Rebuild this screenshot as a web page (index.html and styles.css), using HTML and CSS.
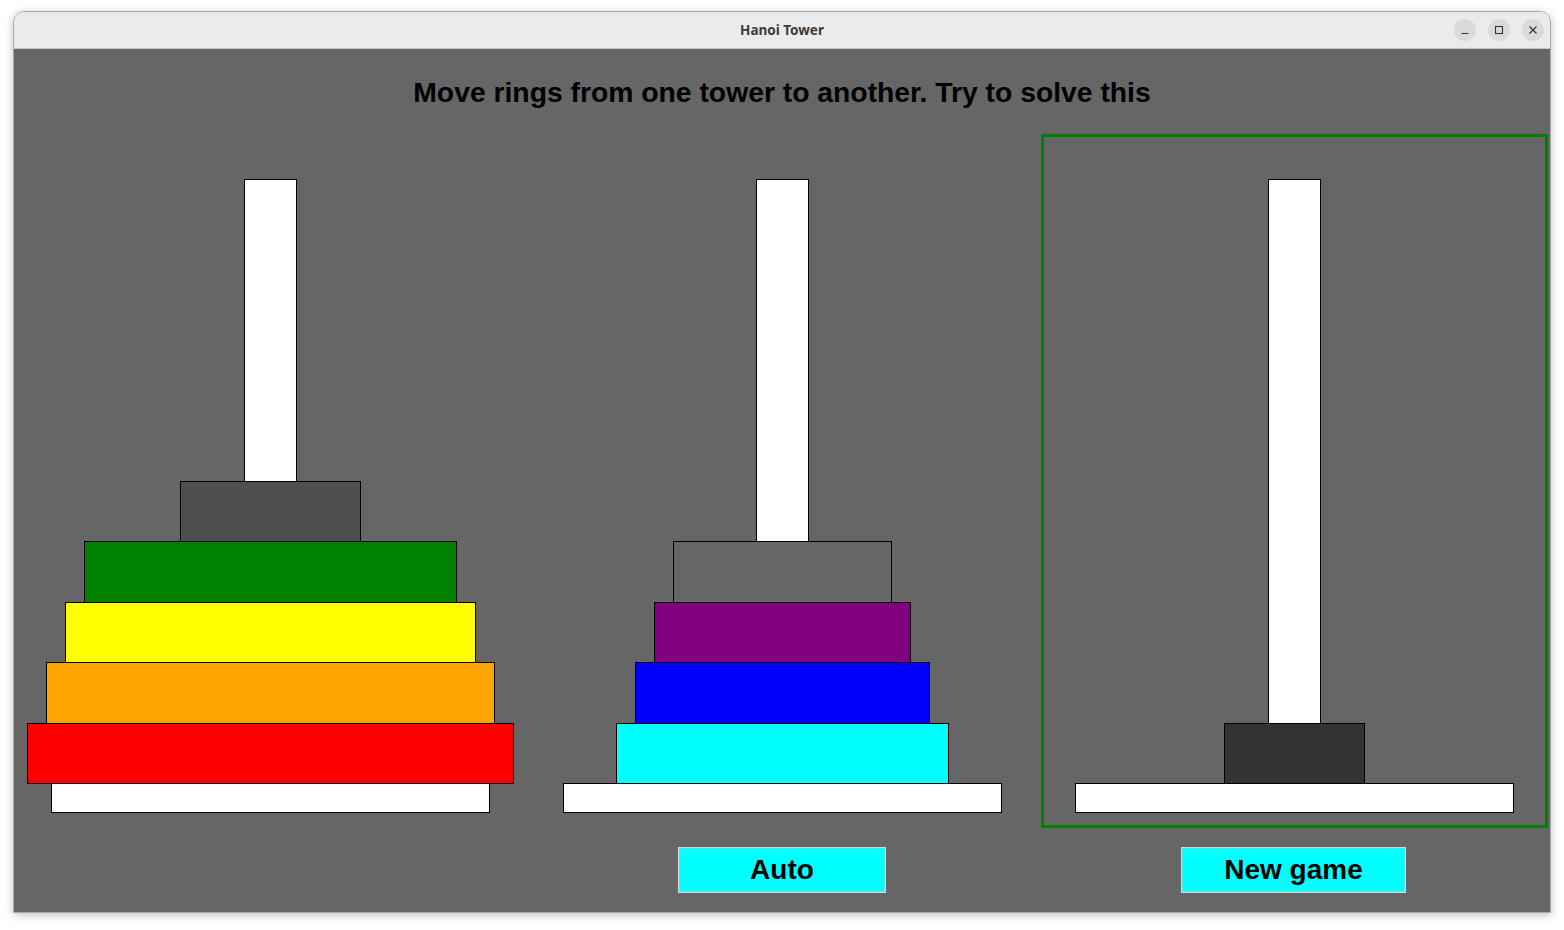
FILE: index.html
```html
<!DOCTYPE html>
<html>
<head>
<meta charset="utf-8">
<title>Hanoi Tower</title>
<link rel="stylesheet" href="styles.css">
</head>
<body>
<div class="window">
  <div class="titlebar">
    <div class="title">Hanoi Tower</div>
    <div class="controls">
      <span class="ctl"><svg width="10" height="10" viewBox="0 0 10 10"><path d="M1.5 8.5h7" stroke="#333" stroke-width="1.2"/></svg></span>
      <span class="ctl"><svg width="10" height="10" viewBox="0 0 10 10"><rect x="1.5" y="1.5" width="7" height="7" fill="none" stroke="#333" stroke-width="1.1"/></svg></span>
      <span class="ctl"><svg width="10" height="10" viewBox="0 0 10 10"><path d="M1.5 1.5l7 7M8.5 1.5l-7 7" stroke="#333" stroke-width="1.2"/></svg></span>
    </div>
  </div>
  <div class="content">
    <h1 class="heading">Move rings from one tower to another. Try to solve this</h1>
    <div class="towers">
      <div class="col">
        <div class="tower">
          <div class="pole"></div>
          <div class="ring c-dark" style="width:181px"></div>
          <div class="ring c-green" style="width:373px"></div>
          <div class="ring c-yellow" style="width:411px"></div>
          <div class="ring c-orange" style="width:449px"></div>
          <div class="ring c-red" style="width:487px"></div>
          <div class="base"></div>
        </div>
      </div>
      <div class="col">
        <div class="tower">
          <div class="pole"></div>
          <div class="ring c-gray" style="width:219px"></div>
          <div class="ring c-purple" style="width:257px"></div>
          <div class="ring c-blue" style="width:295px"></div>
          <div class="ring c-cyan" style="width:333px"></div>
          <div class="base"></div>
        </div>
      </div>
      <div class="col">
        <div class="tower selected">
          <div class="pole"></div>
          <div class="ring c-darker" style="width:141px"></div>
          <div class="base"></div>
        </div>
      </div>
    </div>
    <div class="buttons">
      <div class="bcol"></div>
      <div class="bcol"><button class="btn btn-auto">Auto</button></div>
      <div class="bcol"><button class="btn btn-new">New game</button></div>
    </div>
  </div>
</div>
</body>
</html>
```

FILE: styles.css
```css
html, body {
  margin: 0;
  padding: 0;
  background: #ffffff;
}
body {
  width: 1564px;
  height: 930px;
  overflow: hidden;
  font-family: "Liberation Sans", Arial, sans-serif;
}
.window {
  margin: 11px 0 0 13px;
  width: 1536px;
  border: 1px solid #a9a9a9;
  border-radius: 11px 11px 0 0;
  box-shadow: 0 2px 8px rgba(0,0,0,0.25);
  overflow: hidden;
}
.titlebar {
  height: 36px;
  background: #ebebeb;
  border-bottom: 1px solid #c4c4c4;
  display: flex;
  align-items: center;
  justify-content: center;
  position: relative;
}
.title {
  font-family: "Noto Sans", "DejaVu Sans", sans-serif;
  font-weight: 700;
  font-size: 13.5px;
  color: #3a3a3a;
  margin-top: -1px;
}
.controls {
  position: absolute;
  right: 6px;
  top: 7px;
  display: flex;
  gap: 12px;
}
.ctl {
  width: 22px;
  height: 22px;
  border-radius: 50%;
  background: #dadada;
  display: flex;
  align-items: center;
  justify-content: center;
}
.content {
  background: #666666;
  height: 863px;
  display: flex;
  flex-direction: column;
}
.heading {
  margin: 0;
  height: 85px;
  line-height: 86px;
  text-align: center;
  font-size: 28.3px;
  font-weight: 700;
  color: #000;
}
.towers {
  display: flex;
}
.col {
  width: 512px;
  padding-left: 3px;
  box-sizing: border-box;
}
.tower {
  width: 507px;
  height: 694px;
  box-sizing: border-box;
  border: 3px solid transparent;
  padding: 42px 0 12px;
  display: flex;
  flex-direction: column;
  align-items: center;
}
.tower.selected {
  border-color: #008000;
}
.pole {
  width: 53px;
  flex: 1;
  background: #fff;
  border: 1px solid #000;
  box-sizing: border-box;
  margin-bottom: -1px;
}
.ring {
  height: 61.5px;
  flex: none;
  border: 1px solid #000;
  box-sizing: border-box;
  margin-bottom: -1px;
}
.base {
  width: 439px;
  height: 30px;
  flex: none;
  background: #fff;
  border: 1px solid #000;
  box-sizing: border-box;
}
.c-dark { background: #4f4f4f; }
.c-green { background: #008000; }
.c-yellow { background: #ffff00; }
.c-orange { background: #ffa500; }
.c-red { background: #ff0000; }
.c-gray { background: #666666; }
.c-purple { background: #800080; }
.c-blue { background: #0000ff; }
.c-cyan { background: #00ffff; }
.c-darker { background: #333333; }
.buttons {
  display: flex;
  margin-top: 19px;
}
.bcol {
  width: 512px;
  display: flex;
  justify-content: center;
}
.btn {
  height: 46px;
  background: #00ffff;
  border: 1px solid #d8d8d8;
  box-shadow: inset 0 0 0 1px #4fe6e6;
  font-family: "Liberation Sans", Arial, sans-serif;
  font-weight: 700;
  font-size: 28px;
  color: #000;
  padding: 0;
  margin: 0;
}
.btn-auto { width: 208px; }
.btn-new { width: 225px; margin-right: 1px; }
```
